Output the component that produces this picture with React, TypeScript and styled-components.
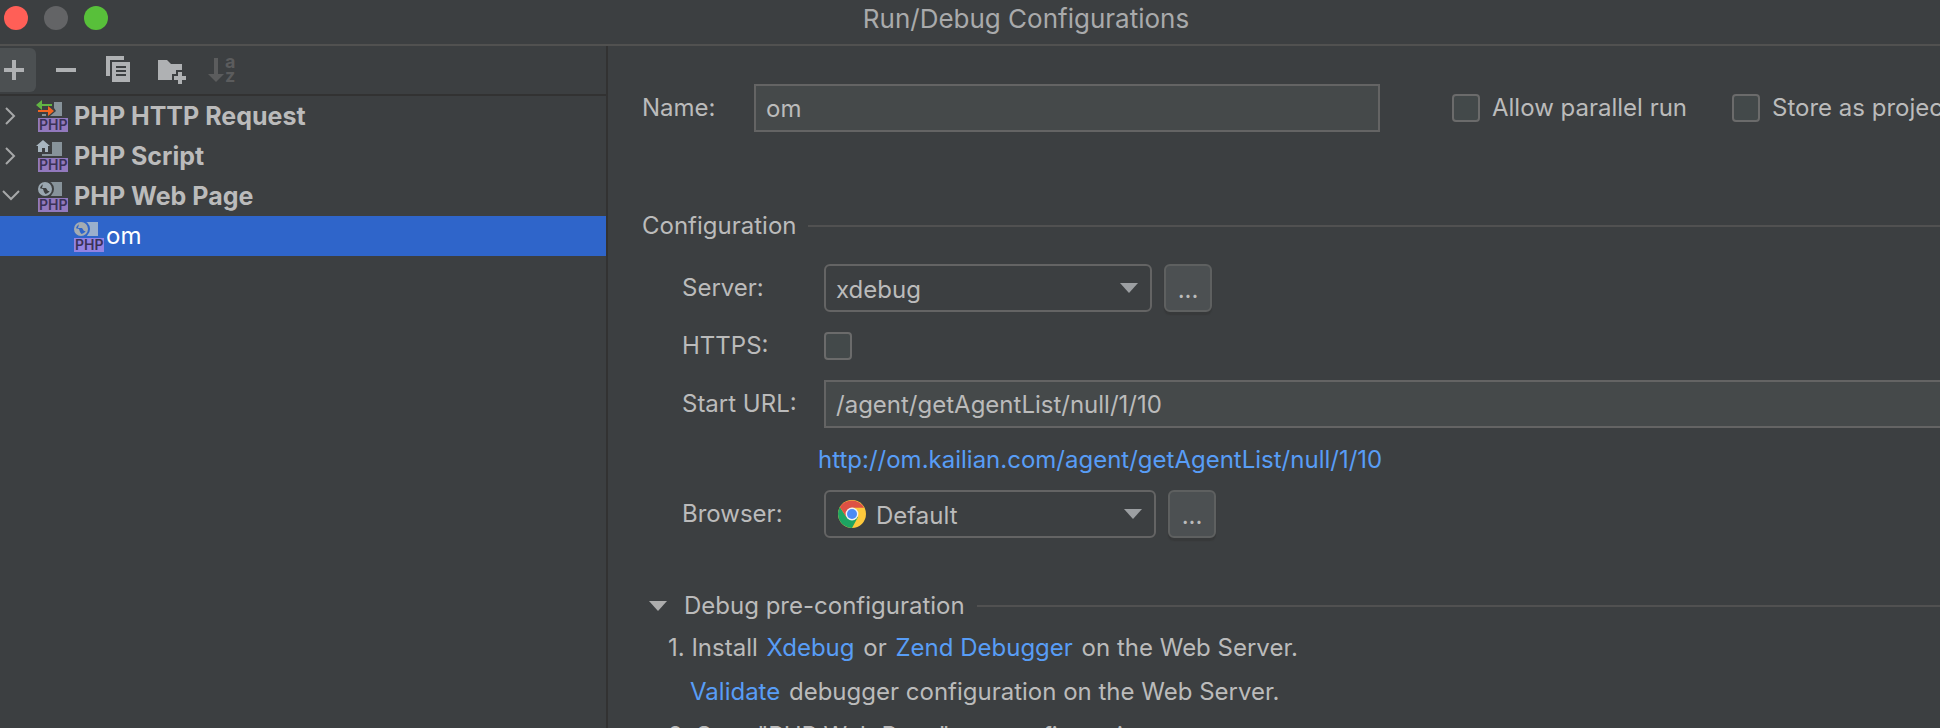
import React from "react";
import styled, { createGlobalStyle, css } from "styled-components";

const Global = createGlobalStyle`
  * { box-sizing: border-box; }
  html, body { margin: 0; background: #3c3f41; }
  body, input, select, button {
    font-family: Inter, "Liberation Sans", sans-serif;
    font-size: 24px;
    color: #bbbbbb;
  }
`;

const Screen = styled.div`
  height: 100vh;
  overflow: hidden;
`;

/* The window is wider than the visible screen and runs off its right edge. */
const Dialog = styled.div`
  display: flex;
  flex-direction: column;
  width: calc(100% + 112px);
  height: 100%;
  background: #3c3f41;
  line-height: 32px;
  white-space: nowrap;
`;

const TitleBar = styled.header`
  display: grid;
  grid-template-columns: 1fr auto 1fr;
  align-items: center;
  flex: none;
  height: 46px;
  padding: 0 4px 8px;
  border-bottom: 2px solid #515150;
`;

const WindowButtons = styled.div`
  display: flex;
  gap: 16px;
`;

const WindowButton = styled.button<{ $color: string }>`
  width: 24px;
  height: 24px;
  padding: 0;
  border: 0;
  border-radius: 50%;
  background: ${(p) => p.$color};
`;

const Title = styled.h1`
  margin: 0;
  padding-top: 2px;
  font-size: 26px;
  font-weight: 400;
  color: #a9aaab;
`;

const Body = styled.div`
  display: flex;
  flex: 1;
  min-height: 0;
`;

const Sidebar = styled.aside`
  flex: none;
  width: 608px;
  border-right: 2px solid #323232;
`;

const Toolbar = styled.div`
  display: flex;
  align-items: center;
  gap: 8px;
  height: 50px;
  border-bottom: 2px solid #323232;
`;

const ToolButton = styled.button<{ $active?: boolean }>`
  display: flex;
  align-items: center;
  justify-content: center;
  width: 44px;
  height: 44px;
  padding: 0;
  border: 0;
  border-radius: 6px;
  background: none;
  ${(p) =>
    p.$active &&
    css`
      width: 36px;
      padding-right: 8px;
      border-radius: 0 6px 6px 0;
      background: #4c5052;
    `}

  svg { flex: none; overflow: visible; }
`;

const Tree = styled.ul`
  margin: 0;
  padding: 0;
  list-style: none;
`;

const TreeRow = styled.li<{ $child?: boolean; $selected?: boolean }>`
  display: flex;
  align-items: center;
  height: 40px;
  padding-left: ${(p) => (p.$child ? "72px" : "0")};
  font-size: ${(p) => (p.$child ? 24 : 25)}px;
  font-weight: ${(p) => (p.$child ? 400 : 700)};
  color: ${(p) => (p.$selected ? "#ffffff" : "#bbbbbb")};
  background: ${(p) => (p.$selected ? "#2f65ca" : "none")};

  svg { flex: none; }
`;

const Expander = styled.button`
  display: flex;
  align-items: center;
  width: 36px;
  height: 40px;
  padding: 0;
  border: 0;
  background: none;
`;

const Content = styled.main`
  flex: 1;
  min-width: 0;
  overflow: hidden;
  padding: 38px 0 0 34px;
`;

const NameRow = styled.div`
  display: flex;
  align-items: center;
`;

const NameLabel = styled.label`
  flex: none;
  width: 112px;
`;

const NameInputWrap = styled.div`
  flex: 0 0 626px;
  display: flex;
  margin-right: 72px;
`;

const TextInput = styled.input`
  flex: 1;
  min-width: 0;
  height: 48px;
  padding: 0 10px;
  border: 2px solid #646464;
  border-radius: 0;
  background: #45494a;
`;

const CheckBox = styled.input.attrs({ type: "checkbox" })`
  appearance: none;
  flex: none;
  width: 28px;
  height: 28px;
  margin: 0;
  border: 2px solid #6b6b6b;
  border-radius: 4px;
  background: #43494a;
`;

const CheckLabel = styled.label`
  display: flex;
  align-items: center;
  flex: none;
  gap: 12px;
  margin-right: 45px;
`;

const Section = styled.div`
  display: flex;
  align-items: center;
  gap: 12px;
`;

const SectionTitle = styled.h2`
  margin: 0;
  font-size: 24px;
  font-weight: 400;
`;

const Rule = styled.div`
  flex: 1;
  height: 2px;
  background: #515151;
`;

const ConfigSection = styled.section`
  margin-top: 78px;
`;

const Fields = styled.div`
  display: grid;
  grid-template-columns: 142px 1fr;
  align-items: center;
  row-gap: 20px;
  margin: 22px 0 0 40px;
  line-height: 28px;
`;

const Field = styled.div`
  display: flex;
  align-items: center;
  gap: 12px;
`;

const SelectWrap = styled.div<{ $width: number }>`
  display: grid;
  align-items: center;
  width: ${(p) => p.$width}px;

  > * { grid-area: 1 / 1; }
  > svg { pointer-events: none; }
`;

const Select = styled.select<{ $icon?: boolean }>`
  appearance: none;
  width: 100%;
  height: 48px;
  padding: 2px 40px 0 ${(p) => (p.$icon ? 50 : 10)}px;
  border: 2px solid #646464;
  border-radius: 6px;
  background: #3c3f41;
`;

const SelectIcon = styled.svg`
  margin-left: 14px;
`;

const Arrow = styled.svg`
  justify-self: end;
  margin-right: 14px;
`;

const MoreButton = styled.button`
  width: 48px;
  height: 48px;
  padding: 2px 0 0;
  border: 2px solid #5e6060;
  border-radius: 6px;
  background: #4c5052;
  box-shadow: 0 3px 1px #37393a;
`;

const Link = styled.a`
  color: #589df6;
  text-decoration: none;
`;

const UrlRow = styled.div`
  grid-column: 2;
  margin: -2px 0 -4px -6px;
`;

const DebugSection = styled.section`
  margin-top: 52px;
`;

const Disclosure = styled.button`
  display: flex;
  align-items: center;
  gap: 17px;
  padding: 0 0 0 7px;
  border: 0;
  background: none;
  line-height: 32px;
`;

const Steps = styled.ol`
  margin: 10px 0 0;
  padding: 0 0 0 26px;
  list-style: none;
`;

const Step = styled.li<{ $nested?: boolean }>`
  padding-left: ${(p) => (p.$nested ? 20 : 0)}px;
  margin-bottom: 12px;

  a { margin: 0 2px; }
`;

type PhpKind = "http" | "script" | "web";

const PhpIcon = ({ kind, bright }: { kind: PhpKind; bright?: boolean }) => {
  const bg = bright ? "#2f65ca" : "#3c3f41";
  const gray = bright ? "#9ab0cc" : "#87939a";
  const globe = bright ? "#a3abb2" : "#9aa7b0";
  return (
    <svg width={bright ? 34 : 38} height="34" viewBox={bright ? "0 0 34 34" : "0 0 38 34"} aria-hidden="true">
      {kind === "http" && (
        <>
          <path d="M18 3h8v14H14l6-5-2-3zM6 15h4v2H6z" fill={gray} />
          <path d="M0 6l6-5v4h10v2H6v4z" fill="#62b543" />
          <path d="M2 11h10V7l6 5-6 5v-4H2z" fill="#f26522" />
        </>
      )}
      {kind === "script" && (
        <>
          <path d="M16 3h10v14H6v-2h10z" fill={gray} />
          <path d="M7 1l7 6h-2v6H9V9H6v4H2V7H0z" fill="#a7b5bf" />
        </>
      )}
      {kind === "web" && (
        <>
          <path d="M12 3h14v14H12z" fill={gray} />
          <circle cx="9" cy="10" r="9" fill={bg} />
          <circle cx="9" cy="10" r="6" fill="none" stroke={globe} strokeWidth="2" />
          <path d="M3 9l4 1 1 3 2 3-3 0-4-3zM7 5l5-1 2 3 1 5-3 0-2-3-4 0z" fill={globe} />
        </>
      )}
      <path d="M2 19h30v14H2z" fill={bright ? "#9383e3" : "#9279bd"} />
      <text x="3" y="31" fontSize="14" fontWeight="600" fill="#3a3258">
        PHP
      </text>
    </svg>
  );
};

const Chevron = ({ open }: { open?: boolean }) => (
  <svg width="22" height="20" viewBox="0 0 22 20" fill="none" stroke="#a7a8a9" strokeWidth="2" aria-hidden="true">
    <path d={open ? "M3 5l8 8 8-8" : "M6 2l8 8-8 8"} />
  </svg>
);

const DownArrow = () => (
  <Arrow width="18" height="12" viewBox="0 0 18 12" aria-hidden="true">
    <path d="M0 1h18L9 11z" fill="#9c9fa2" />
  </Arrow>
);

const groups: { label: string; kind: PhpKind; open?: boolean }[] = [
  { label: "PHP HTTP Request", kind: "http" },
  { label: "PHP Script", kind: "script" },
  { label: "PHP Web Page", kind: "web", open: true },
];

export default function App() {
  return (
    <Screen>
      <Global />
      <Dialog>
        <TitleBar>
          <WindowButtons>
            <WindowButton $color="#ff5f57" aria-label="Close" />
            <WindowButton $color="#636466" aria-label="Minimize" />
            <WindowButton $color="#58c03a" aria-label="Zoom" />
          </WindowButtons>
          <Title>Run/Debug Configurations</Title>
        </TitleBar>
        <Body>
          <Sidebar>
            <Toolbar>
              <ToolButton $active aria-label="Add">
                <svg width="28" height="28" viewBox="0 0 28 28" fill="#afb1b3">
                  <path d="M12 4h4v8h8v4h-8v8h-4v-8H4v-4h8z" />
                </svg>
              </ToolButton>
              <ToolButton aria-label="Remove">
                <svg width="28" height="28" viewBox="0 0 28 28" fill="#afb1b3">
                  <path d="M4 12h20v4H4z" />
                </svg>
              </ToolButton>
              <ToolButton aria-label="Copy">
                <svg width="28" height="28" viewBox="0 0 28 28" fill="#afb1b3">
                  <path d="M2 0h18v4H6v16H2z" />
                  <path fillRule="evenodd" d="M8 6h18v20H8zM12 10v2h10v-2zM12 14v2h10v-2zM12 18v2h10v-2z" />
                </svg>
              </ToolButton>
              <ToolButton aria-label="New folder">
                <svg width="32" height="28" viewBox="0 0 32 28" fill="#afb1b3">
                  <path d="M4 4h9l4 4h11v6h-6v4h-4v6H4z" />
                  <path d="M24 16h4v4h4v4h-4v4h-4v-4h-4v-4h4z" />
                </svg>
              </ToolButton>
              <ToolButton aria-label="Sort configurations" disabled>
                <svg width="28" height="28" viewBox="0 0 28 28" fill="#5b5c5d">
                  <path d="M6 2h4v16h6l-8 8-8-8h6z" />
                  <text x="17" y="12" fontSize="18" fontWeight="700">a</text>
                  <text x="17" y="26" fontSize="18" fontWeight="700">z</text>
                </svg>
              </ToolButton>
            </Toolbar>
            <Tree>
              {groups.map((g) => (
                <TreeRow key={g.label}>
                  <Expander aria-label={g.label} aria-expanded={!!g.open}>
                    <Chevron open={g.open} />
                  </Expander>
                  <PhpIcon kind={g.kind} />
                  {g.label}
                </TreeRow>
              ))}
              <TreeRow $child $selected>
                <PhpIcon kind="web" bright />
                om
              </TreeRow>
            </Tree>
          </Sidebar>
          <Content>
            <NameRow>
              <NameLabel htmlFor="name">Name:</NameLabel>
              <NameInputWrap>
                <TextInput id="name" defaultValue="om" />
              </NameInputWrap>
              <CheckLabel>
                <CheckBox />
                Allow parallel run
              </CheckLabel>
              <CheckLabel>
                <CheckBox />
                Store as project file
              </CheckLabel>
            </NameRow>
            <ConfigSection>
              <Section>
                <SectionTitle>Configuration</SectionTitle>
                <Rule />
              </Section>
              <Fields>
                <label htmlFor="server">Server:</label>
                <Field>
                  <SelectWrap $width={328}>
                    <Select id="server">
                      <option>xdebug</option>
                    </Select>
                    <DownArrow />
                  </SelectWrap>
                  <MoreButton aria-label="Edit servers">...</MoreButton>
                </Field>
                <label htmlFor="https">HTTPS:</label>
                <Field>
                  <CheckBox id="https" />
                </Field>
                <label htmlFor="url">Start URL:</label>
                <Field>
                  <TextInput id="url" defaultValue="/agent/getAgentList/null/1/10" />
                </Field>
                <UrlRow>
                  <Link href="#preview">http://om.kailian.com/agent/getAgentList/null/1/10</Link>
                </UrlRow>
                <label htmlFor="browser">Browser:</label>
                <Field>
                  <SelectWrap $width={332}>
                    <Select id="browser" $icon>
                      <option>Default</option>
                    </Select>
                    <SelectIcon width="28" height="28" viewBox="0 0 28 28" aria-hidden="true">
                      <circle cx="14" cy="14" r="14" fill="#fdc93c" />
                      <path d="M14 14L8.5 17.2 1.9 7A14 14 0 0 0 14 28l6-11z" fill="#1da462" />
                      <path d="M14 14L8.5 17.2 1.9 7a14 14 0 0 1 24.2 0.7H14z" fill="#dd5144" />
                      <circle cx="14" cy="14" r="6.4" fill="#f1f1f1" />
                      <circle cx="14" cy="14" r="5" fill="#4c8bf5" />
                    </SelectIcon>
                    <DownArrow />
                  </SelectWrap>
                  <MoreButton aria-label="Edit browsers">...</MoreButton>
                </Field>
              </Fields>
            </ConfigSection>
            <DebugSection>
              <Section>
                <Disclosure aria-expanded="true">
                  <svg width="18" height="12" viewBox="0 0 18 12" aria-hidden="true">
                    <path d="M0 1h18L9 11z" fill="#adadad" />
                  </svg>
                  Debug pre-configuration
                </Disclosure>
                <Rule />
              </Section>
              <Steps>
                <Step>
                  1. Install <Link href="#xdebug">Xdebug</Link> or <Link href="#zend">Zend Debugger</Link> on the Web
                  Server.
                </Step>
                <Step $nested>
                  <Link href="#validate">Validate</Link> debugger configuration on the Web Server.
                </Step>
                <Step>2. Start "PHP Web Page" run configuration.</Step>
              </Steps>
            </DebugSection>
          </Content>
        </Body>
      </Dialog>
    </Screen>
  );
}
